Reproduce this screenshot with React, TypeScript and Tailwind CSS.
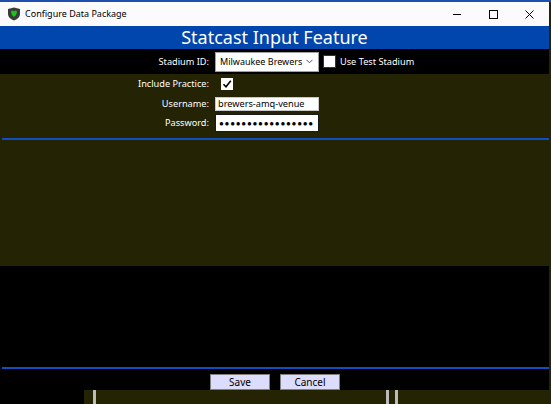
import React from 'react'

const font = { fontFamily: '"Noto Sans", "Open Sans", sans-serif' }

const AppIcon = () => (
  <svg width="14" height="14" viewBox="0 0 14 14">
    <path d="M1 2 L7 0.5 L13 2 L13 7 Q13 11 7 13.5 Q1 11 1 7 Z" fill="#3a3a3a" />
    <path d="M4 5 Q4 3.5 5.5 3.5 Q7 3.5 7 5 Q7 3.5 8.5 3.5 Q10 3.5 10 5 Q10 7.5 7 10 Q4 7.5 4 5 Z" fill="#19c419" />
  </svg>
)

const Check = () => (
  <svg width="10" height="10" viewBox="0 0 10 10">
    <path d="M1.5 5.2 L4 7.8 L8.8 1.8" stroke="#000" strokeWidth="1.6" fill="none" />
  </svg>
)

const Label: React.FC<{ text: string }> = ({ text }) => (
  <div className="w-[215px] pr-[6px] text-right text-[9.2px] text-white leading-none whitespace-nowrap">{text}</div>
)

export default function App() {
  return (
    <div className="w-[551px] h-[404px] bg-black overflow-hidden flex flex-col" style={font}>
      <div className="h-[2px] bg-[#1e4fae] shrink-0" />
      <div className="flex flex-1 min-h-0">
        <div className="w-[549px] flex flex-col">
          {/* title bar */}
          <div className="h-[24px] bg-[#fbfbfe] flex items-center pl-[7px] shrink-0">
            <AppIcon />
            <span className="ml-[4px] text-[9px] text-black whitespace-nowrap">Configure Data Package</span>
            <div className="ml-auto flex items-center h-full pr-[2px]">
              <div className="w-[36px] flex justify-center">
                <div className="w-[8px] h-px bg-black" />
              </div>
              <div className="w-[36px] flex justify-center">
                <div className="w-[9px] h-[9px] border border-black" />
              </div>
              <div className="w-[36px] flex justify-center">
                <svg width="9" height="9" viewBox="0 0 9 9">
                  <path d="M0.5 0.5 L8.5 8.5 M8.5 0.5 L0.5 8.5" stroke="#000" strokeWidth="1" />
                </svg>
              </div>
            </div>
          </div>

          {/* header */}
          <div className="h-[23px] bg-[#0146ad] flex items-center justify-center shrink-0">
            <span className="text-[18px] text-white leading-none pb-[1px]">Statcast Input Feature</span>
          </div>

          {/* stadium row */}
          <div className="h-[25px] flex items-center shrink-0">
            <Label text="Stadium ID:" />
            <div className="w-[104px] h-[20px] bg-white border border-[#a0a0a0] flex items-center pl-[4px] pr-[5px]">
              <span className="text-[9px] text-black leading-none whitespace-nowrap">Milwaukee Brewers</span>
              <svg className="ml-auto" width="7" height="5" viewBox="0 0 7 5">
                <path d="M0.5 0.8 L3.5 3.8 L6.5 0.8" stroke="#555" strokeWidth="1" fill="none" />
              </svg>
            </div>
            <div className="ml-[4px] w-[13px] h-[13px] bg-white border border-[#333]" />
            <span className="ml-[4px] text-[9.2px] text-white leading-none whitespace-nowrap">Use Test Stadium</span>
          </div>

          {/* olive area */}
          <div className="h-[192px] bg-[#242404] flex flex-col shrink-0">
            <div className="h-[20px] flex items-center">
              <Label text="Include Practice:" />
              <div className="ml-[6px] w-[12px] h-[12px] bg-white flex items-center justify-center">
                <Check />
              </div>
            </div>
            <div className="h-[18px] flex items-center mt-[1px]">
              <Label text="Username:" />
              <div className="w-[104px] h-[14px] bg-white border border-[#c8c8c8] flex items-center pl-[2px]">
                <span className="text-[9.2px] text-black leading-none whitespace-nowrap">brewers-amq-venue</span>
              </div>
            </div>
            <div className="h-[20px] flex items-center">
              <Label text="Password:" />
              <div className="w-[104px] h-[18px] bg-white border border-[#1a1a1a] flex items-center pl-[3px] overflow-hidden">
                <span className="text-[8px] text-black leading-none tracking-[0.75px] whitespace-nowrap">●●●●●●●●●●●●●●●●●</span>
              </div>
            </div>
            <div className="mt-[5px] ml-[2px] h-[2px] bg-[#0f4fc0]" />
          </div>

          {/* black area */}
          <div className="h-[101px] shrink-0" />
          <div className="ml-[2px] h-[2px] bg-[#0f4fc0] shrink-0" />

          {/* buttons */}
          <div className="flex justify-center gap-[10px] pt-[5px] pl-[1px]">
            <button className="w-[60px] h-[16px] bg-[#dcdcfd] border border-[#808080] text-[10px] text-black leading-none">Save</button>
            <button className="w-[60px] h-[16px] bg-[#dcdcfd] border border-[#808080] text-[10px] text-black leading-none">Cancel</button>
          </div>
          <div className="mt-auto h-[14px] ml-[84px] bg-[#242404] flex">
            <div className="ml-[9px] w-[3px] bg-[#bbb]" />
            <div className="ml-[290px] w-[3px] bg-[#bbb]" />
            <div className="ml-[6px] w-[3px] bg-[#bbb]" />
          </div>
        </div>
        <div className="w-[2px] bg-[#242404]" />
      </div>
    </div>
  )
}
